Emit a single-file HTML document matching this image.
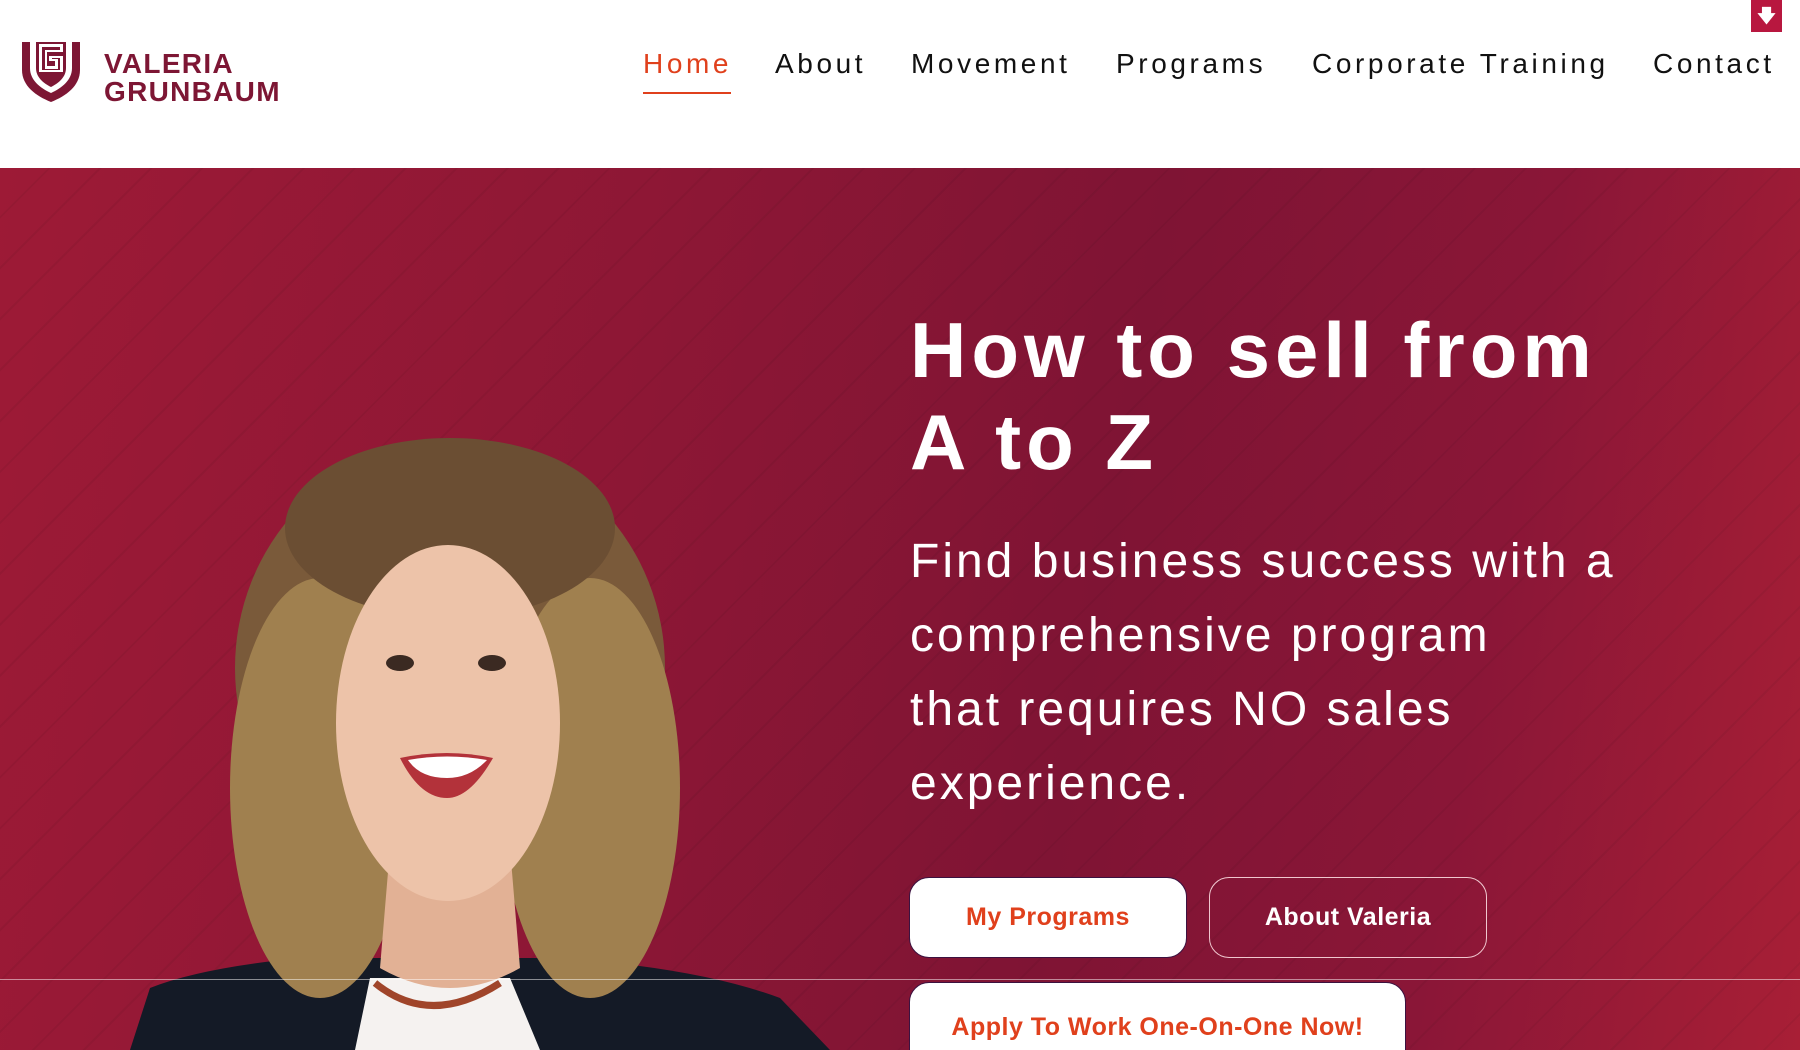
<!DOCTYPE html>
<html><head><meta charset="utf-8"><style>
*{margin:0;padding:0;box-sizing:border-box}
body{width:1800px;height:1050px;overflow:hidden;background:#fff;font-family:"Liberation Sans",sans-serif;position:relative}
.hdr{position:absolute;left:0;top:0;width:1800px;height:168px;background:#fff}
.logo-t{position:absolute;left:104px;top:50px;color:#7d1634;font-weight:bold;font-size:28px;line-height:28px;letter-spacing:1.3px}
.nav{position:absolute;top:48px;font-size:28px;color:#111;letter-spacing:3.6px}
.hero{position:absolute;left:0;top:168px;width:1800px;height:882px;
background:linear-gradient(100deg,#9d1a36 0%,#8d1735 35%,#7f1434 60%,#8a1637 80%,#a81f36 100%);overflow:hidden}
.stripes{position:absolute;inset:0;background:repeating-linear-gradient(135deg,rgba(255,255,255,0) 0 34px,rgba(0,0,0,0.05) 34px 36px)}
h1{position:absolute;left:910px;top:136px;color:#fff;font-size:78px;line-height:92px;font-weight:bold;letter-spacing:5px;white-space:nowrap}
p.sub{position:absolute;left:910px;top:357px;color:#fff;font-size:48px;line-height:74px;letter-spacing:3px;white-space:nowrap}
.btn{position:absolute;height:81px;border-radius:20px;font-size:25px;font-weight:bold;display:flex;align-items:center;justify-content:center;letter-spacing:0.5px}
.w{background:#fff;color:#e0401c;border:1.5px solid #3b1240}
.o{border:1.5px solid #f0c7cf;color:#fff}
</style></head><body>
<div class="hdr">
<svg style="position:absolute;left:22px;top:42px" width="58" height="60" viewBox="0 0 58 60">
<path d="M0 0H58V28C58 44 44 54 29 60C14 54 0 44 0 28Z" fill="#7d1634"/>
<path d="M8 0V26C8 38 18 46 29 51C40 46 50 38 50 26V0H44V26C44 35 37 41 29 45C21 41 14 35 14 26V0Z" fill="#fff"/>
<path d="M17 2H41V10H25V24H33V19H27V14H41V30H17Z" fill="#fff"/>
<path d="M20 5H38V8H23V27H36V17H30V16H38V28H20Z" fill="#7d1634"/>
</svg>
<div class="logo-t">VALERIA<br>GRUNBAUM</div>
<div class="nav" style="left:643px;color:#e0401c">Home</div>
<div style="position:absolute;left:643px;top:92px;width:88px;height:2px;background:#e0401c"></div>
<div class="nav" style="left:775px">About</div>
<div class="nav" style="left:911px">Movement</div>
<div class="nav" style="left:1116px">Programs</div>
<div class="nav" style="left:1312px">Corporate Training</div>
<div class="nav" style="left:1653px">Contact</div>
<div style="position:absolute;left:1751px;top:0;width:31px;height:32px;background:#b8173f;color:#fff;font-size:18px;text-align:center;line-height:32px;font-weight:bold">&#x1F847;</div>
</div>
<div class="hero"><div class="stripes"></div>
<svg style="position:absolute;left:0;top:0" width="900" height="882">
<path d="M130 882L150 820Q200 800 300 790L350 790L560 790Q700 800 780 830L830 882Z" fill="#141a26"/>
<path d="M355 882L370 810L510 810L540 882Z" fill="#f5f2f0"/>
<ellipse cx="450" cy="500" rx="215" ry="225" fill="#7a5a3a"/>
<ellipse cx="320" cy="620" rx="90" ry="210" fill="#a0804f"/>
<ellipse cx="590" cy="620" rx="90" ry="210" fill="#a0804f"/>
<ellipse cx="450" cy="360" rx="165" ry="90" fill="#6b4e33"/>
<path d="M390 680L510 680L520 800Q450 840 380 800Z" fill="#e2b195"/>
<ellipse cx="448" cy="555" rx="112" ry="178" fill="#edc3a9"/>
<ellipse cx="400" cy="495" rx="14" ry="8" fill="#3b2a22"/>
<ellipse cx="492" cy="495" rx="14" ry="8" fill="#3b2a22"/>
<path d="M400 590Q447 580 493 590Q470 630 447 630Q420 630 400 590Z" fill="#b3323a"/>
<path d="M408 592Q447 585 487 592Q470 610 447 610Q420 610 408 592Z" fill="#fff"/>
<path d="M375 815Q430 860 500 815" stroke="#a0452a" stroke-width="7" fill="none"/>
</svg>
<h1>How to sell from<br>A to Z</h1>
<p class="sub">Find business success with a<br>comprehensive program<br>that requires NO sales<br>experience.</p>
<div class="btn w" style="left:909px;top:709px;width:278px">My Programs</div>
<div class="btn o" style="left:1209px;top:709px;width:278px">About Valeria</div>
<div style="position:absolute;left:0;top:811px;width:1800px;height:1px;background:rgba(255,255,255,0.5)"></div>
<div class="btn w" style="left:909px;top:814px;width:497px;height:90px">Apply To Work One-On-One Now!</div>
</div>
</body></html>
